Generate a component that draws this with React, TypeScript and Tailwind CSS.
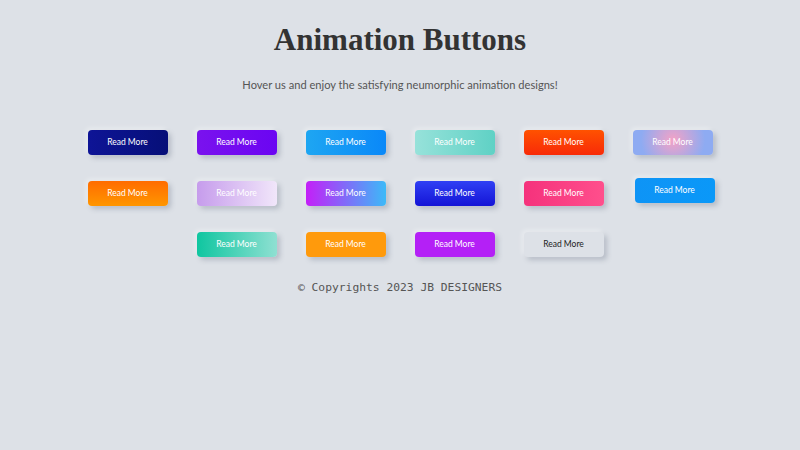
// Neumorphic "Read More" button showcase
type Btn = { bg: string; text?: string; lift?: boolean };

const buttons: Btn[] = [
  { bg: "bg-[linear-gradient(to_right,#0e1496,#060f78)]" },
  { bg: "bg-[linear-gradient(to_right,#7a12ee,#6b05f2)]" },
  { bg: "bg-[linear-gradient(to_right,#1ea6f2,#0a88f8)]" },
  { bg: "bg-[linear-gradient(to_right,#97e2da,#5fd1c5)]" },
  { bg: "bg-[linear-gradient(to_bottom,#ff5200,#f82a08)]" },
  { bg: "bg-[radial-gradient(circle_at_50%_40%,#f3a2c6,#8eabf2_75%)]" },
  { bg: "bg-[linear-gradient(to_bottom,#ff6c00,#ff9600)]" },
  { bg: "bg-[linear-gradient(to_right,#c69cec,#f1e6fa)]" },
  { bg: "bg-[linear-gradient(to_right,#c41ff8,#3cbaf8)]" },
  { bg: "bg-[linear-gradient(to_bottom,#3040f4,#1414d6)]" },
  { bg: "bg-[linear-gradient(to_right,#f5327c,#ff4f8c)]" },
  { bg: "bg-[linear-gradient(to_right,#0e94f6,#0a98f8)]", lift: true },
  { bg: "bg-[linear-gradient(to_right,#0fc6a0,#8fe0d2)]" },
  { bg: "bg-[#ff9a0c]" },
  { bg: "bg-[#b420f6]" },
  { bg: "bg-[#dde1e7]", text: "text-[#222]" },
];

function ReadMore({ bg, text, lift }: Btn) {
  return (
    <div className="w-[109px] flex justify-center">
      <button
        className={`w-[80px] h-[25px] rounded-[4px] text-[8.5px] ${bg} ${text ?? "text-white"} ${
          lift ? "translate-x-[2px] -translate-y-[3px]" : ""
        } shadow-[-2px_-2px_5px_#ffffff66,3px_3px_5px_rgba(94,104,121,0.3)]`}
        style={{ fontFamily: "Lato, sans-serif" }}
      >
        Read More
      </button>
    </div>
  );
}

export default function App() {
  return (
    <div className="w-[800px] h-[450px] bg-[#dde1e7] flex flex-col items-center pt-[22px]">
      <h1 className="text-[31px] leading-[36px] font-bold text-[#333] font-['Liberation_Serif',serif]">
        Animation Buttons
      </h1>
      <p className="mt-[17px] text-[11.1px] leading-[20px] text-[#555] font-['Lato',sans-serif]">
        Hover us and enjoy the satisfying neumorphic animation designs!
      </p>

      <div className="mt-[35px] w-[654px] flex flex-wrap justify-center gap-y-[26px]">
        {buttons.map((b, i) => (
          <ReadMore key={i} {...b} />
        ))}
      </div>

      <p className="mt-[23px] text-[11.3px] leading-[16px] text-[#555] font-['DejaVu_Sans_Mono',monospace]">
        © Copyrights 2023 JB DESIGNERS
      </p>
    </div>
  );
}
